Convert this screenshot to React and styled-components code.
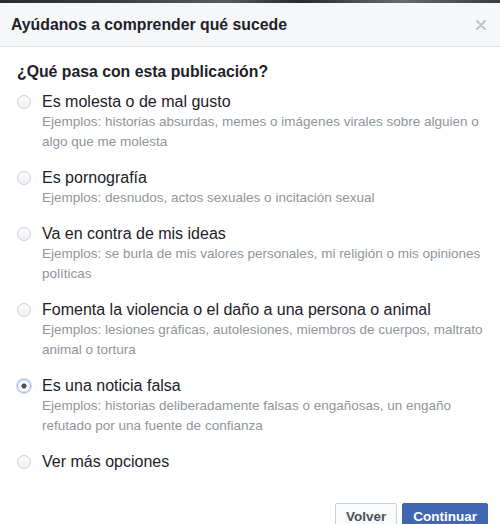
import React, { useState } from "react";
import styled, { createGlobalStyle } from "styled-components";

const GlobalStyle = createGlobalStyle`
  html, body { margin: 0; padding: 0; background: #ffffff; }
  body { font-family: "Liberation Sans", Arial, Helvetica, sans-serif; -webkit-font-smoothing: antialiased; }
  * { box-sizing: border-box; }
`;

const Page = styled.div`
  width: 500px;
  height: 524px;
  overflow: hidden;
  background: #fff;
  display: flex;
  flex-direction: column;
`;

const PhotoStrip = styled.div`
  height: 3px;
  flex: none;
  background: linear-gradient(90deg, #2b2b2b 0%, #3a3a3a 20%, #5a5a5a 45%, #2a2a2a 60%, #6a6a6a 80%, #3c3c3c 100%);
`;

const Header = styled.div`
  flex: none;
  height: 44px;
  background: #f6f7f9;
  border-bottom: 1px solid #e5e5e5;
  display: flex;
  align-items: center;
  justify-content: space-between;
  padding: 0 13px 0 11px;
`;

const Title = styled.h2`
  margin: 0;
  font-size: 15.8px;
  font-weight: bold;
  color: #1d2129;
  line-height: 20px;
`;

const Close = styled.button`
  border: 0;
  background: transparent;
  padding: 0;
  width: 12px;
  height: 12px;
  display: flex;
  align-items: center;
  justify-content: center;
  cursor: pointer;
`;

const Body = styled.div`
  padding: 15px 11px 0 17px;
`;

const Question = styled.div`
  font-size: 15.8px;
  font-weight: bold;
  color: #1d2129;
  line-height: 20px;
`;

const OptionList = styled.div`
  margin-top: 10px;
  display: flex;
  flex-direction: column;
  gap: 16px;
`;

const Option = styled.label`
  display: grid;
  grid-template-columns: 14px 1fr;
  column-gap: 11px;
  cursor: pointer;
`;

const Radio = styled.span`
  width: 14px;
  height: 14px;
  margin-top: 3px;
  border-radius: 50%;
  border: 1px solid ${(p) => (p.$checked ? "#9cb4e8" : "#cdd0d5")};
  background: ${(p) =>
    p.$checked
      ? "radial-gradient(circle, #4b4f56 0 2.3px, #f4f6fb 2.8px)"
      : "linear-gradient(#ffffff, #ecedf0)"};
  box-shadow: ${(p) =>
    p.$checked ? "0 0 0 1px rgba(120,160,230,0.35)" : "inset 0 1px 1px rgba(0,0,0,0.04)"};
  display: block;
`;

const OptionText = styled.div`
  display: flex;
  flex-direction: column;
`;

const Label = styled.div`
  font-size: 16px;
  color: #1d2129;
  line-height: 20px;
`;

const Description = styled.div`
  font-size: 13.5px;
  color: #90949c;
  line-height: 20px;
`;

const Divider = styled.div`
  height: 1px;
  background: #dddfe2;
  margin: 17px 12px 0 10px;
`;

const Footer = styled.div`
  display: flex;
  justify-content: flex-end;
  gap: 5px;
  padding: 14px 12px 0 0;
`;

const Button = styled.button`
  height: 26px;
  padding: 0 10px;
  font-family: "Liberation Sans", Arial, sans-serif;
  font-size: 13.5px;
  font-weight: bold;
  border-radius: 2px;
  border: 1px solid ${(p) => (p.$primary ? "#4267b2" : "#ccd0d5")};
  background: ${(p) => (p.$primary ? "#4267b2" : "#f9fafb")};
  color: ${(p) => (p.$primary ? "#ffffff" : "#4b4f56")};
  cursor: pointer;
`;

const options = [
  {
    label: "Es molesta o de mal gusto",
    desc: "Ejemplos: historias absurdas, memes o imágenes virales sobre alguien o algo que me molesta",
  },
  {
    label: "Es pornografía",
    desc: "Ejemplos: desnudos, actos sexuales o incitación sexual",
  },
  {
    label: "Va en contra de mis ideas",
    desc: "Ejemplos: se burla de mis valores personales, mi religión o mis opiniones políticas",
  },
  {
    label: "Fomenta la violencia o el daño a una persona o animal",
    desc: "Ejemplos: lesiones gráficas, autolesiones, miembros de cuerpos, maltrato animal o tortura",
  },
  {
    label: "Es una noticia falsa",
    desc: "Ejemplos: historias deliberadamente falsas o engañosas, un engaño refutado por una fuente de confianza",
  },
  { label: "Ver más opciones" },
];

export default function App() {
  const [selected, setSelected] = useState(4);
  return (
    <Page>
      <GlobalStyle />
      <PhotoStrip />
      <Header>
        <Title>Ayúdanos a comprender qué sucede</Title>
        <Close aria-label="Cerrar">
          <svg width="10" height="10" viewBox="0 0 10 10">
            <path d="M1 1 L9 9 M9 1 L1 9" stroke="#bec2c9" strokeWidth="2" strokeLinecap="round" />
          </svg>
        </Close>
      </Header>
      <Body>
        <Question>¿Qué pasa con esta publicación?</Question>
        <OptionList>
          {options.map((o, i) => (
            <Option key={i} onClick={() => setSelected(i)}>
              <Radio $checked={selected === i} />
              <OptionText>
                <Label>{o.label}</Label>
                {o.desc && <Description>{o.desc}</Description>}
              </OptionText>
            </Option>
          ))}
        </OptionList>
      </Body>
      <Divider />
      <Footer>
        <Button>Volver</Button>
        <Button $primary>Continuar</Button>
      </Footer>
    </Page>
  );
}
